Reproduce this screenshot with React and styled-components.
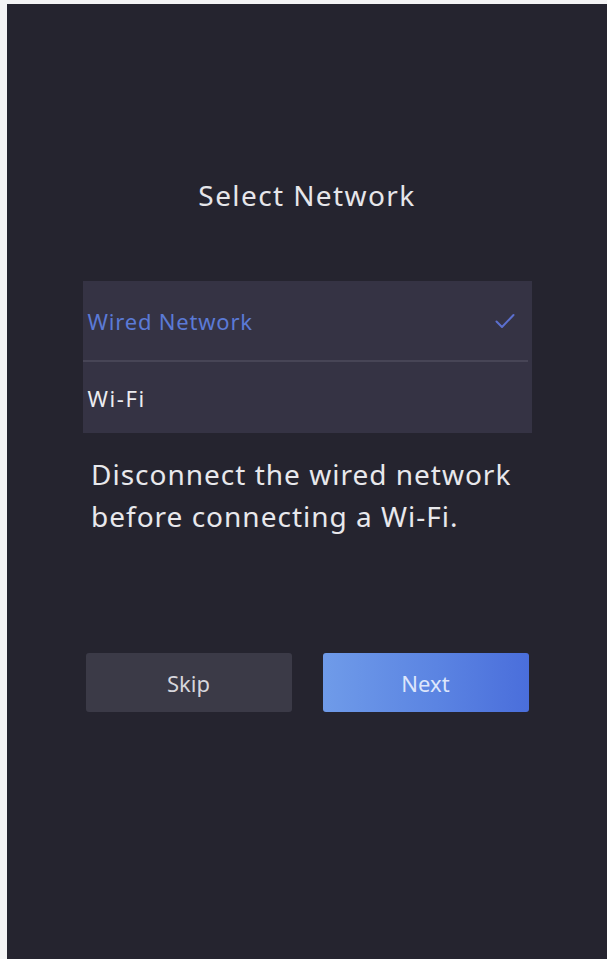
import React from 'react';
import styled, { createGlobalStyle } from 'styled-components';

const GlobalStyle = createGlobalStyle`
    html, body {
        margin: 0;
        padding: 0;
        background: #f4f4f5;
    }
    body {
        font-family: "Noto Sans", "Open Sans", sans-serif;
    }
`;

const Screen = styled.div`
    margin: 4px 0 0 7px;
    width: 600px;
    height: 955px;
    background-color: #25242f;
    display: flex;
    flex-direction: column;
    align-items: center;
    box-sizing: border-box;
    padding-top: 171px;
`;

const Title = styled.h1`
    margin: 0;
    font-size: 28px;
    font-weight: 400;
    color: #e6e6ea;
    line-height: 40px;
    letter-spacing: 1.4px;
`;

const OptionList = styled.div`
    margin-top: 66px;
    width: 449px;
    background-color: #353344;
    display: flex;
    flex-direction: column;
`;

const Option = styled.div`
    height: ${p => p.$h}px;
    display: flex;
    align-items: center;
    justify-content: space-between;
    padding: 0 13px 0 5px;
    margin: 0 4px 0 0;
    font-size: 22px;
    letter-spacing: ${p => (p.$active ? '0.8px' : '1.6px')};
    color: ${p => (p.$active ? '#5b7ad6' : '#ececf0')};
    border-bottom: ${p => (p.$divider ? '2px solid #474556' : 'none')};
`;

const Hint = styled.p`
    margin: 20px 0 0 0;
    width: 432px;
    font-size: 28px;
    line-height: 42px;
    color: #e8e8ec;
    letter-spacing: 1px;
`;

const Actions = styled.div`
    margin-top: 116px;
    display: flex;
    gap: 31px;
`;

const Button = styled.button`
    width: 206px;
    height: 59px;
    border: none;
    border-radius: 3px;
    font-family: inherit;
    font-size: 22px;
    color: ${p => (p.$primary ? '#dde6fb' : '#d6d6dc')};
    background: ${p =>
        p.$primary
            ? 'linear-gradient(90deg, #6f9be9 0%, #5b84e2 55%, #4a6edb 100%)'
            : '#3b3a47'};
    cursor: pointer;
`;

const Check = () => (
    <svg width="20" height="16" viewBox="0 0 20 16" fill="none">
        <path d="M1.5 8.5 L7 14 L18.5 2" stroke="#5b6fce" strokeWidth="2" strokeLinecap="round" strokeLinejoin="round" />
    </svg>
);

const App = () => {
    return (
        <>
            <GlobalStyle />
            <Screen>
                <Title>Select Network</Title>
                <OptionList>
                    <Option $h={79} $active $divider>
                        <span>Wired Network</span>
                        <Check />
                    </Option>
                    <Option $h={71}>
                        <span>Wi-Fi</span>
                    </Option>
                </OptionList>
                <Hint>Disconnect the wired network before connecting a Wi-Fi.</Hint>
                <Actions>
                    <Button>Skip</Button>
                    <Button $primary>Next</Button>
                </Actions>
            </Screen>
        </>
    );
};

export default App;
